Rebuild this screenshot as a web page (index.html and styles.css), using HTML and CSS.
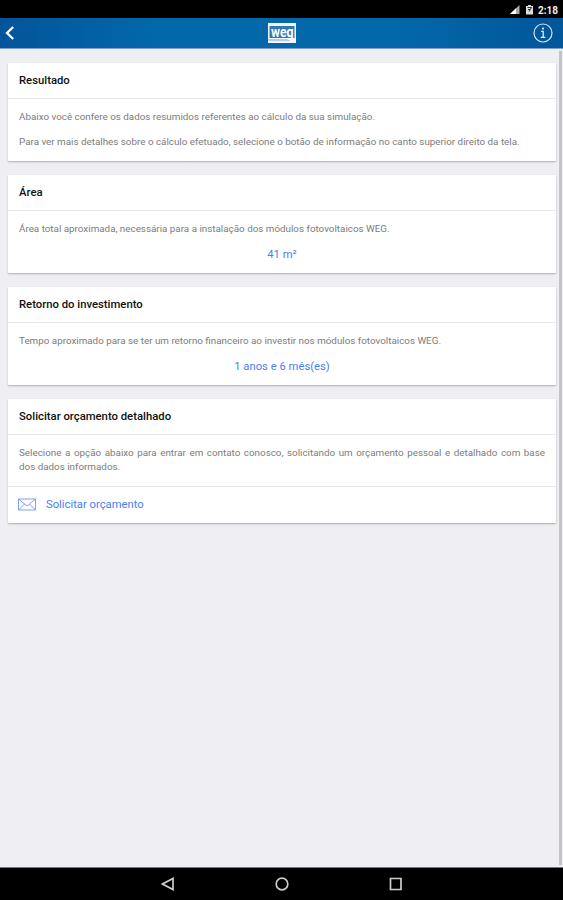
FILE: index.html
```html
<!DOCTYPE html>
<html lang="pt-BR">
<head>
<meta charset="utf-8">
<title>Resultado</title>
<link rel="stylesheet" href="styles.css">
</head>
<body>
<div class="status">
  <svg class="signal" width="11" height="10" viewBox="0 0 11 10"><path d="M0 9L9.5 0V9Z" fill="#aaa"/><path d="M0 9L6 3.2V9Z" fill="#fff"/></svg>
  <svg class="battery" width="7" height="10" viewBox="0 0 7 10"><path d="M2 0h3v1h2v8.500H0V1h2Z" fill="#ddd"/><path d="M1.500 2.500h4L3 6.500M2 4.500h2" stroke="#333" stroke-width="1" fill="none"/></svg>
  <span>2:18</span>
</div>
<header class="bar">
  <svg class="back" width="10" height="16" viewBox="0 0 10 16"><path d="M8.200 2L2 8l6.200 6" fill="none" stroke="#fff" stroke-width="2.300"/></svg>
  <svg class="logo" width="28" height="20" viewBox="0 0 28 20"><path d="M0 0h28v20H0Z" fill="#f2f6fa"/><path d="M1.500 3h25V15h-25Z" fill="#3378b6"/><path d="M0 17h22" stroke="#5c94c6" stroke-width=".8"/><text x="3" y="13.500" textLength="22.500" lengthAdjust="spacingAndGlyphs">weg</text></svg>
  <svg class="info" width="20" height="20" viewBox="0 0 20 20"><circle cx="10" cy="10" r="9" fill="none" stroke="#d5e5f5" stroke-width="1.200"/><path d="M8.200 8.300h2v6M7.800 14.400h4.600" fill="none" stroke="#e4effa" stroke-width="1.300"/><circle cx="10" cy="5.600" r="1.100" fill="#e4effa"/></svg>
</header>
<main>
  <section class="card">
    <h2>Resultado</h2>
    <div class="body">
      <p>Abaixo você confere os dados resumidos referentes ao cálculo da sua simulação.</p>
      <p>Para ver mais detalhes sobre o cálculo efetuado, selecione o botão de informação no canto superior direito da tela.</p>
    </div>
  </section>
  <section class="card">
    <h2>Área</h2>
    <div class="body">
      <p>Área total aproximada, necessária para a instalação dos módulos fotovoltaicos WEG.</p>
      <p class="value">41 m²</p>
    </div>
  </section>
  <section class="card">
    <h2>Retorno do investimento</h2>
    <div class="body">
      <p>Tempo aproximado para se ter um retorno financeiro ao investir nos módulos fotovoltaicos WEG.</p>
      <p class="value">1 anos e 6 mês(es)</p>
    </div>
  </section>
  <section class="card request">
    <h2>Solicitar orçamento detalhado</h2>
    <div class="body">
      <p>Selecione a opção abaixo para entrar em contato conosco, solicitando um orçamento pessoal e detalhado com base dos&nbsp;dados informados.</p>
    </div>
    <a class="action"><svg width="18" height="13" viewBox="0 0 18 13"><path d="M.5 1h17v11H.5ZM.5 1L9 8l8.500-7M.5 12L6.500 6M17.500 12L11.500 6" fill="none" stroke="#6389ec" stroke-width=".8"/></svg><span>Solicitar orçamento</span></a>
  </section>
  <div class="scroll"></div>
</main>
<nav>
  <svg width="14" height="14" viewBox="0 0 14 14"><path d="M12 1.500v11L1.500 7Z"/></svg>
  <svg width="14" height="14" viewBox="0 0 14 14"><circle cx="7" cy="7" r="5.800"/></svg>
  <svg width="14" height="14" viewBox="0 0 14 14"><path d="M1.500 1.500h10.500v11H1.500Z"/></svg>
</nav>
</body>
</html>
```
FILE: styles.css
```css
* { box-sizing: border-box; }
body {
  margin: 0;
  height: 900px;
  display: flex;
  flex-direction: column;
  background: #efeef3;
  font-family: Roboto, "Liberation Sans", sans-serif;
  overflow: hidden;
}
.status {
  height: 18px;
  background: #000;
  color: #eee;
  display: flex;
  justify-content: flex-end;
  align-items: center;
  padding: 2px 5px 0 0;
  font-size: 10px;
  font-weight: 700;
}
.signal { margin-right: 5px; }
.battery { margin-right: 5px; }
.bar {
  height: 31px;
  display: grid;
  grid-template-columns: 1fr 28px 1fr;
  align-items: center;
  padding: 0 10px 0 5px;
  background: linear-gradient(90deg, #02559b 0, #0268aa 28%, #0268aa 70%, #02569a 100%);
  border-bottom: 1px solid #7d9fc9;
}
.logo { margin-left: 3px; overflow: visible; }
.logo text {
  font-family: Roboto, sans-serif;
  font-size: 15px;
  font-weight: 700;
  fill: #fff;
}
.info { justify-self: end; }
main {
  flex: 1;
  position: relative;
  padding: 13.500px 7px 0 8px;
  display: flex;
  flex-direction: column;
  gap: 14px;
}
.card {
  height: 98px;
  background: #fff;
  border-radius: 1px;
  box-shadow: 0 1px 2px rgba(0, 0, 0, .28);
}
.request { height: 124px; }
h2 {
  margin: 0;
  height: 36px;
  line-height: 36px;
  padding-left: 11px;
  border-bottom: 1px solid #e7e7ea;
  font-size: 11.300px;
  font-weight: 500;
  color: #111;
}
.body { padding: 11px 11px 0; }
p {
  margin: 0 0 11px;
  font-size: 9.830px;
  line-height: 14px;
  color: #7c7c7c;
  text-align: justify;
}
p.value {
  padding-top: 1px;
  font-size: 11.250px;
  color: #4a80ef;
  text-align: center;
}
.request .body { height: 52px; border-bottom: 1px solid #e7e7ea; }
.request p { margin: 0; }
.action {
  height: 36px;
  display: flex;
  align-items: center;
  gap: 10px;
  padding-left: 10px;
  font-size: 11.250px;
  color: #4a80ef;
}
.scroll {
  position: absolute;
  top: 2px;
  right: 1px;
  bottom: 2px;
  width: 3px;
  background: #c4c4ca;
}
nav {
  height: 33px;
  background: #000;
  border-top: 1px solid #777;
  display: flex;
  justify-content: center;
  align-items: center;
  gap: 100px;
}
nav svg { fill: none; stroke: #ccc; stroke-width: 1.700; }
```
